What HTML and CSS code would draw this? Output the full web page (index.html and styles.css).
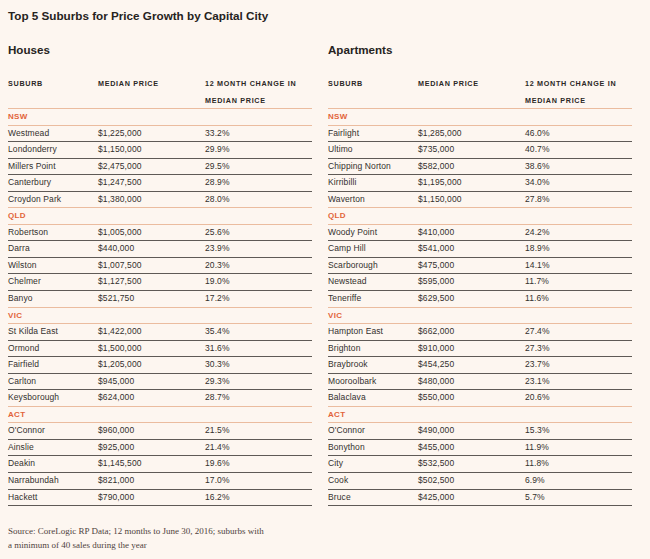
FILE: index.html
```html
<!DOCTYPE html>
<html>
<head>
<meta charset="utf-8">
<link rel="stylesheet" href="styles.css">
</head>
<body>
<div class="page">
  <h1 class="title">Top 5 Suburbs for Price Growth by Capital City</h1>
  <div class="tables">
    <section class="tbl">
      <h2 class="tbl-title">Houses</h2>
      <div class="row head"><span>Suburb</span><span>Median price</span><span>12 month change in median price</span></div>
      <div class="row region"><span>NSW</span></div>
      <div class="row"><span>Westmead</span><span>$1,225,000</span><span>33.2%</span></div>
      <div class="row"><span>Londonderry</span><span>$1,150,000</span><span>29.9%</span></div>
      <div class="row"><span>Millers Point</span><span>$2,475,000</span><span>29.5%</span></div>
      <div class="row"><span>Canterbury</span><span>$1,247,500</span><span>28.9%</span></div>
      <div class="row last"><span>Croydon Park</span><span>$1,380,000</span><span>28.0%</span></div>
      <div class="row region"><span>QLD</span></div>
      <div class="row"><span>Robertson</span><span>$1,005,000</span><span>25.6%</span></div>
      <div class="row"><span>Darra</span><span>$440,000</span><span>23.9%</span></div>
      <div class="row"><span>Wilston</span><span>$1,007,500</span><span>20.3%</span></div>
      <div class="row"><span>Chelmer</span><span>$1,127,500</span><span>19.0%</span></div>
      <div class="row last"><span>Banyo</span><span>$521,750</span><span>17.2%</span></div>
      <div class="row region"><span>VIC</span></div>
      <div class="row"><span>St Kilda East</span><span>$1,422,000</span><span>35.4%</span></div>
      <div class="row"><span>Ormond</span><span>$1,500,000</span><span>31.6%</span></div>
      <div class="row"><span>Fairfield</span><span>$1,205,000</span><span>30.3%</span></div>
      <div class="row"><span>Carlton</span><span>$945,000</span><span>29.3%</span></div>
      <div class="row last"><span>Keysborough</span><span>$624,000</span><span>28.7%</span></div>
      <div class="row region"><span>ACT</span></div>
      <div class="row"><span>O'Connor</span><span>$960,000</span><span>21.5%</span></div>
      <div class="row"><span>Ainslie</span><span>$925,000</span><span>21.4%</span></div>
      <div class="row"><span>Deakin</span><span>$1,145,500</span><span>19.6%</span></div>
      <div class="row"><span>Narrabundah</span><span>$821,000</span><span>17.0%</span></div>
      <div class="row"><span>Hackett</span><span>$790,000</span><span>16.2%</span></div>
    </section>
    <section class="tbl">
      <h2 class="tbl-title">Apartments</h2>
      <div class="row head"><span>Suburb</span><span>Median price</span><span>12 month change in median price</span></div>
      <div class="row region"><span>NSW</span></div>
      <div class="row"><span>Fairlight</span><span>$1,285,000</span><span>46.0%</span></div>
      <div class="row"><span>Ultimo</span><span>$735,000</span><span>40.7%</span></div>
      <div class="row"><span>Chipping Norton</span><span>$582,000</span><span>38.6%</span></div>
      <div class="row"><span>Kirribilli</span><span>$1,195,000</span><span>34.0%</span></div>
      <div class="row last"><span>Waverton</span><span>$1,150,000</span><span>27.8%</span></div>
      <div class="row region"><span>QLD</span></div>
      <div class="row"><span>Woody Point</span><span>$410,000</span><span>24.2%</span></div>
      <div class="row"><span>Camp Hill</span><span>$541,000</span><span>18.9%</span></div>
      <div class="row"><span>Scarborough</span><span>$475,000</span><span>14.1%</span></div>
      <div class="row"><span>Newstead</span><span>$595,000</span><span>11.7%</span></div>
      <div class="row last"><span>Teneriffe</span><span>$629,500</span><span>11.6%</span></div>
      <div class="row region"><span>VIC</span></div>
      <div class="row"><span>Hampton East</span><span>$662,000</span><span>27.4%</span></div>
      <div class="row"><span>Brighton</span><span>$910,000</span><span>27.3%</span></div>
      <div class="row"><span>Braybrook</span><span>$454,250</span><span>23.7%</span></div>
      <div class="row"><span>Mooroolbark</span><span>$480,000</span><span>23.1%</span></div>
      <div class="row last"><span>Balaclava</span><span>$550,000</span><span>20.6%</span></div>
      <div class="row region"><span>ACT</span></div>
      <div class="row"><span>O'Connor</span><span>$490,000</span><span>15.3%</span></div>
      <div class="row"><span>Bonython</span><span>$455,000</span><span>11.9%</span></div>
      <div class="row"><span>City</span><span>$532,500</span><span>11.8%</span></div>
      <div class="row"><span>Cook</span><span>$502,500</span><span>6.9%</span></div>
      <div class="row"><span>Bruce</span><span>$425,000</span><span>5.7%</span></div>
    </section>
  </div>
  <p class="source">Source: CoreLogic RP Data; 12 months to June 30, 2016; suburbs with<br>a minimum of 40 sales during the year</p>
</div>
</body>
</html>
```
FILE: styles.css
```css
html, body {
  margin: 0;
  padding: 0;
  background: #fdf6f0;
}
.page {
  width: 650px;
  height: 559px;
  box-sizing: border-box;
  padding: 8px 8px 0 8px;
  font-family: "Liberation Sans", Arial, sans-serif;
  color: #33302d;
}
.title {
  margin: 0;
  font-size: 11.7px;
  line-height: 16px;
  font-weight: bold;
  color: #262321;
}
.tables {
  display: grid;
  grid-template-columns: 304px 304px;
  column-gap: 16px;
}
.tbl-title {
  margin: 19px 0 0 0;
  font-size: 11.6px;
  line-height: 14px;
  font-weight: bold;
  color: #262321;
}
.row {
  display: grid;
  grid-template-columns: 90px 107px 1fr;
  height: 15.55px;
  line-height: 15.55px;
  font-size: 8.5px;
  letter-spacing: 0.1px;
  border-bottom: 1px solid #5f5a56;
}
.row.last, .row.region {
  border-bottom-color: #ebbc9f;
}
.row.head {
  margin-top: 18px;
  height: 33px;
  line-height: 17px;
  font-size: 7.2px;
  font-weight: bold;
  letter-spacing: 0.7px;
  text-transform: uppercase;
  color: #2b2826;
  border-bottom-color: #ebbc9f;
}
.row.head span:last-child {
  padding-right: 8px;
}
.row.region {
  color: #e2643a;
  font-weight: bold;
  font-size: 8px;
  letter-spacing: 0.3px;
}
.source {
  margin: 18px 0 0 0;
  font-family: "Liberation Serif", "Times New Roman", serif;
  font-size: 9px;
  line-height: 14px;
  color: #4f433d;
}
```
